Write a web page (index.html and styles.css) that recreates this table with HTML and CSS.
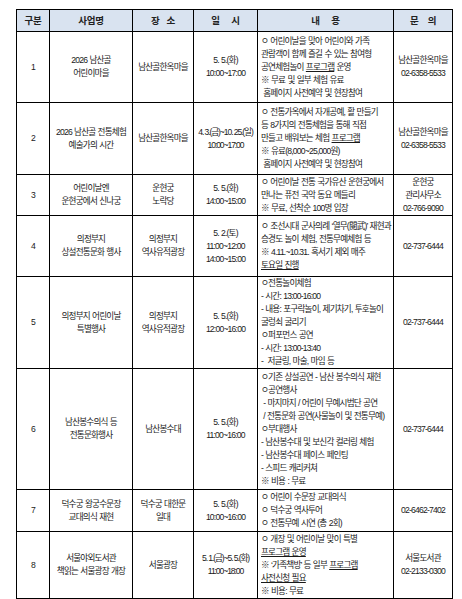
FILE: index.html
```html
<!DOCTYPE html>
<html lang="ko">
<head>
<meta charset="utf-8">
<link rel="stylesheet" href="styles.css">
</head>
<body>
<table class="sched">
<colgroup>
<col class="c1"><col class="c2"><col class="c3"><col class="c4"><col class="c5"><col class="c6">
</colgroup>
<thead>
<tr class="hrow">
<th>구분</th><th>사업명</th><th>장&nbsp;&nbsp;&nbsp;소</th><th>일&nbsp;&nbsp;&nbsp;&nbsp;&nbsp;시</th><th>내&nbsp;&nbsp;&nbsp;&nbsp;&nbsp;용</th><th>문&nbsp;&nbsp;&nbsp;&nbsp;의</th>
</tr>
</thead>
<tbody>
<tr class="r1">
<td>1</td>
<td>2026 남산골<br>어린이마을</td>
<td>남산골한옥마을</td>
<td>5. 5.(화)<br>10:00~17:00</td>
<td class="txt">ㅇ 어린이날을 맞아 어린이와 가족<br>관람객이 함께 즐길 수 있는 참여형<br>공연체험놀이 <u>프로그램</u> 운영<br>※ 무료 및 일부 체험 유료<br>&nbsp;홈페이지 사전예약 및 현장참여</td>
<td>남산골한옥마을<br>02-6358-5533</td>
</tr>
<tr class="r2">
<td>2</td>
<td>2026 남산골 전통체험<br>예술가의 시간</td>
<td>남산골한옥마을</td>
<td class="tight">4. 3.(금)~10. 25.(일)<br>10:00~17:00</td>
<td class="txt">ㅇ 전통가옥에서 자개공예, 활 만들기<br>등 8가지의 전통체험을 통해 직접<br>만들고 배워보는 체험 <u>프로그램</u><br>※ 유료(8,000~25,000원)<br>&nbsp;홈페이지 사전예약 및 현장참여</td>
<td>남산골한옥마을<br>02-6358-5533</td>
</tr>
<tr class="r3">
<td>3</td>
<td>어린이날엔<br>운현궁에서 신나궁</td>
<td>운현궁<br>노락당</td>
<td>5. 5.(화)<br>14:00~15:00</td>
<td class="txt">ㅇ 어린이날 전통 국가유산 운현궁에서<br>만나는 퓨전 국악 동요 메들리<br>※ 무료, 선착순 100명 입장</td>
<td>운현궁<br>관리사무소<br>02-766-9090</td>
</tr>
<tr class="r4">
<td>4</td>
<td>의정부지<br>상설전통문화 행사</td>
<td>의정부지<br>역사유적광장</td>
<td>5. 2.(토)<br>11:00~12:00<br>14:00~15:00</td>
<td class="txt">ㅇ 조선시대 군사의례 ‘열무(閱武)’ 재현과<br>승경도 놀이 체험, 전통무예체험 등<br>※ 4.11.~10.31. 혹서기 제외 매주<br><u>토요일 진행</u></td>
<td>02-737-6444</td>
</tr>
<tr class="r5">
<td>5</td>
<td>의정부지 어린이날<br>특별행사</td>
<td>의정부지<br>역사유적광장</td>
<td>5. 5.(화)<br>12:00~16:00</td>
<td class="txt">ㅇ전통놀이체험<br>- 시간: 13:00-16:00<br>- 내용: 포구락놀이, 제기차기, 투호놀이<br>굴렁쇠 굴리기<br>ㅇ퍼포먼스 공연<br>- 시간: 13:00-13:40<br>-&nbsp;&nbsp;저글링, 마술, 마임 등</td>
<td>02-737-6444</td>
</tr>
<tr class="r6">
<td>6</td>
<td>남산봉수의식 등<br>전통문화행사</td>
<td>남산봉수대</td>
<td>5. 5.(화)<br>11:00~16:00</td>
<td class="txt">ㅇ기존 상설공연 - 남산 봉수의식 재현<br>ㅇ공연행사<br>&nbsp;- 마지마지 / 어린이 무예시범단 공연<br>&nbsp;/ 전통문화 공연(사물놀이 및 전통무예)<br>ㅇ부대행사<br>- 남산봉수대 및 보신각 컬러링 체험<br>- 남산봉수대 페이스 페인팅<br>- 스피드 캐리커쳐<br>※ 비용 : 무료</td>
<td>02-737-6444</td>
</tr>
<tr class="r7">
<td>7</td>
<td>덕수궁 왕궁수문장<br>교대의식 재현</td>
<td>덕수궁 대한문<br>일대</td>
<td>5. 5.(화)<br>10:00~16:00</td>
<td class="txt">ㅇ 어린이 수문장 교대의식<br>ㅇ 덕수궁 역사투어<br>ㅇ 전통무예 시연 (총 2회)</td>
<td>02-6462-7402</td>
</tr>
<tr class="r8">
<td>8</td>
<td>서울야외도서관<br>책읽는 서울광장 개장</td>
<td>서울광장</td>
<td class="tight">5. 1.(금)~5. 5.(화)<br>11:00~18:00</td>
<td class="txt">ㅇ 개장 및 어린이날 맞이 특별<br><u>프로그램 운영</u><br>※ ‘가족책방’ 등 일부 <u>프로그램</u><br><u>사전신청 필요</u><br>※ 비용: 무료</td>
<td>서울도서관<br>02-2133-0300</td>
</tr>
</tbody>
</table>
</body>
</html>
```

FILE: styles.css
```css
html, body {
  margin: 0;
  padding: 0;
  background: #ffffff;
}
body {
  padding: 9px 0 0 16px;
  font-family: "Liberation Sans", "Noto Sans CJK KR", sans-serif;
  color: #1a1a1a;
}
.sched {
  border-collapse: collapse;
  table-layout: fixed;
  width: 437px;
  font-size: 8.6px;
  letter-spacing: -0.8px;
  word-spacing: 0.6px;
  line-height: 13px;
}
.c1 { width: 33px; }
.c2 { width: 83px; }
.c3 { width: 61px; }
.c4 { width: 64px; }
.c5 { width: 136px; }
.c6 { width: 59px; }
.sched th, .sched td {
  border: 1px solid #000;
  padding: 0 1px;
  text-align: center;
  vertical-align: middle;
  white-space: nowrap;
  overflow: hidden;
}
.sched th {
  background: #d9e3f0;
  font-weight: bold;
  font-size: 9.5px;
  letter-spacing: -0.3px;
  word-spacing: 0;
  color: #222;
  height: 21px;
}
.sched td.txt {
  text-align: left;
  padding-left: 3px;
}
.sched td.tight {
  letter-spacing: -1.1px;
  word-spacing: 0;
  padding: 0;
}
.sched u {
  text-decoration: underline;
  text-underline-offset: 1px;
}
.r1 td { height: 70px; }
.r2 td { height: 71px; }
.r3 td { height: 40px; }
.r4 td { height: 60px; }
.r5 td { height: 87px; }
.r6 td { height: 120px; }
.r7 td { height: 41px; }
.r8 td { height: 66px; }
```
